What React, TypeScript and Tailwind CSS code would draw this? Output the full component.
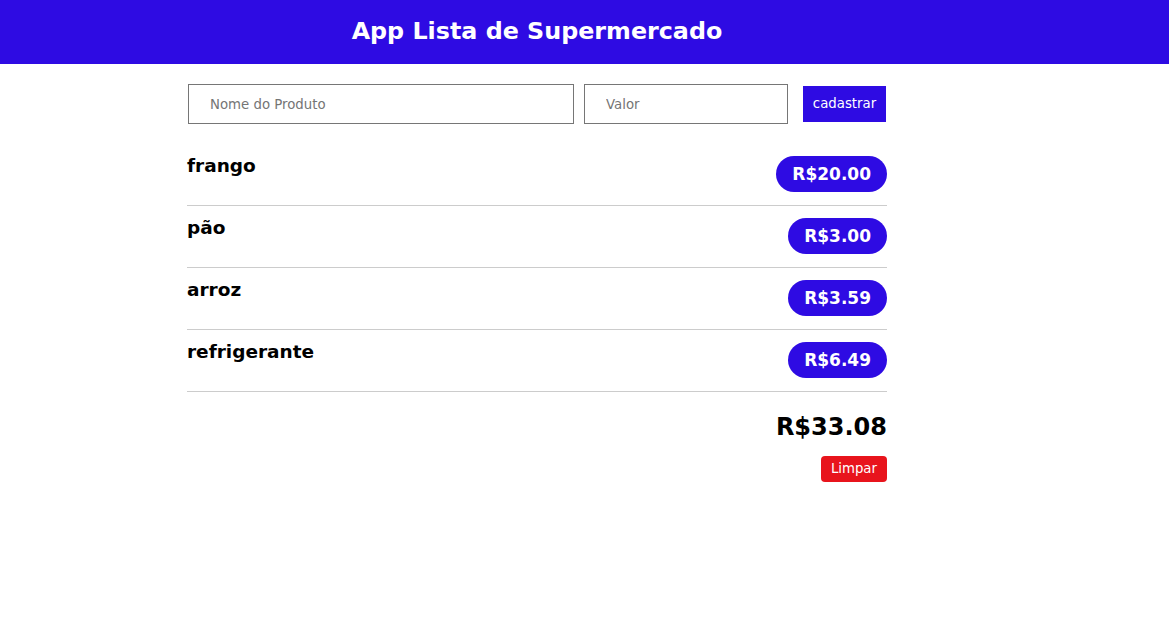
const items = [
  { name: "frango", price: 20.0 },
  { name: "pão", price: 3.0 },
  { name: "arroz", price: 3.59 },
  { name: "refrigerante", price: 6.49 },
];

export default function App() {
  const total = items.reduce((acc, i) => acc + i.price, 0);

  return (
    <div className="min-h-screen bg-white font-['DejaVu_Sans',sans-serif] text-black">
      <header className="h-16 bg-[#2e0be3]">
        <div className="ml-[187px] flex h-16 w-[700px] items-center justify-center">
          <h1 className="text-[23.8px] font-bold text-white">App Lista de Supermercado</h1>
        </div>
      </header>

      <main className="ml-[187px] w-[700px]">
        {/* form */}
        <div className="flex items-center pt-5">
          <input
            className="ml-px h-10 w-[386px] border border-[#767676] px-[21px] text-[13.3px] outline-none placeholder:text-[#757575]"
            placeholder="Nome do Produto"
          />
          <input
            className="ml-[10px] h-10 w-[204px] border border-[#767676] px-[21px] text-[13.3px] outline-none placeholder:text-[#757575]"
            placeholder="Valor"
          />
          <button className="ml-[15px] h-9 w-[83px] bg-[#2e0be3] text-[13.3px] text-white">
            cadastrar
          </button>
        </div>

        {/* list */}
        <ul className="mt-5">
          {items.map((item) => (
            <li
              key={item.name}
              className="flex h-[62px] justify-between border-b border-[#cccccc]"
            >
              <span className="pt-[10px] text-[18.5px] font-bold leading-[24px]">{item.name}</span>
              <span className="mt-3 flex h-9 items-center rounded-full bg-[#2e0be3] px-4 pt-[2px] text-[17px] font-bold text-white">
                R${item.price.toFixed(2)}
              </span>
            </li>
          ))}
        </ul>

        {/* total */}
        <div className="flex flex-col items-end">
          <p className="mt-[18px] text-[24px] font-bold leading-[34px]">R${total.toFixed(2)}</p>
          <button className="mt-3 h-[26px] rounded bg-[#e8141c] px-[10px] text-[13.3px] text-white">
            Limpar
          </button>
        </div>
      </main>
    </div>
  );
}
